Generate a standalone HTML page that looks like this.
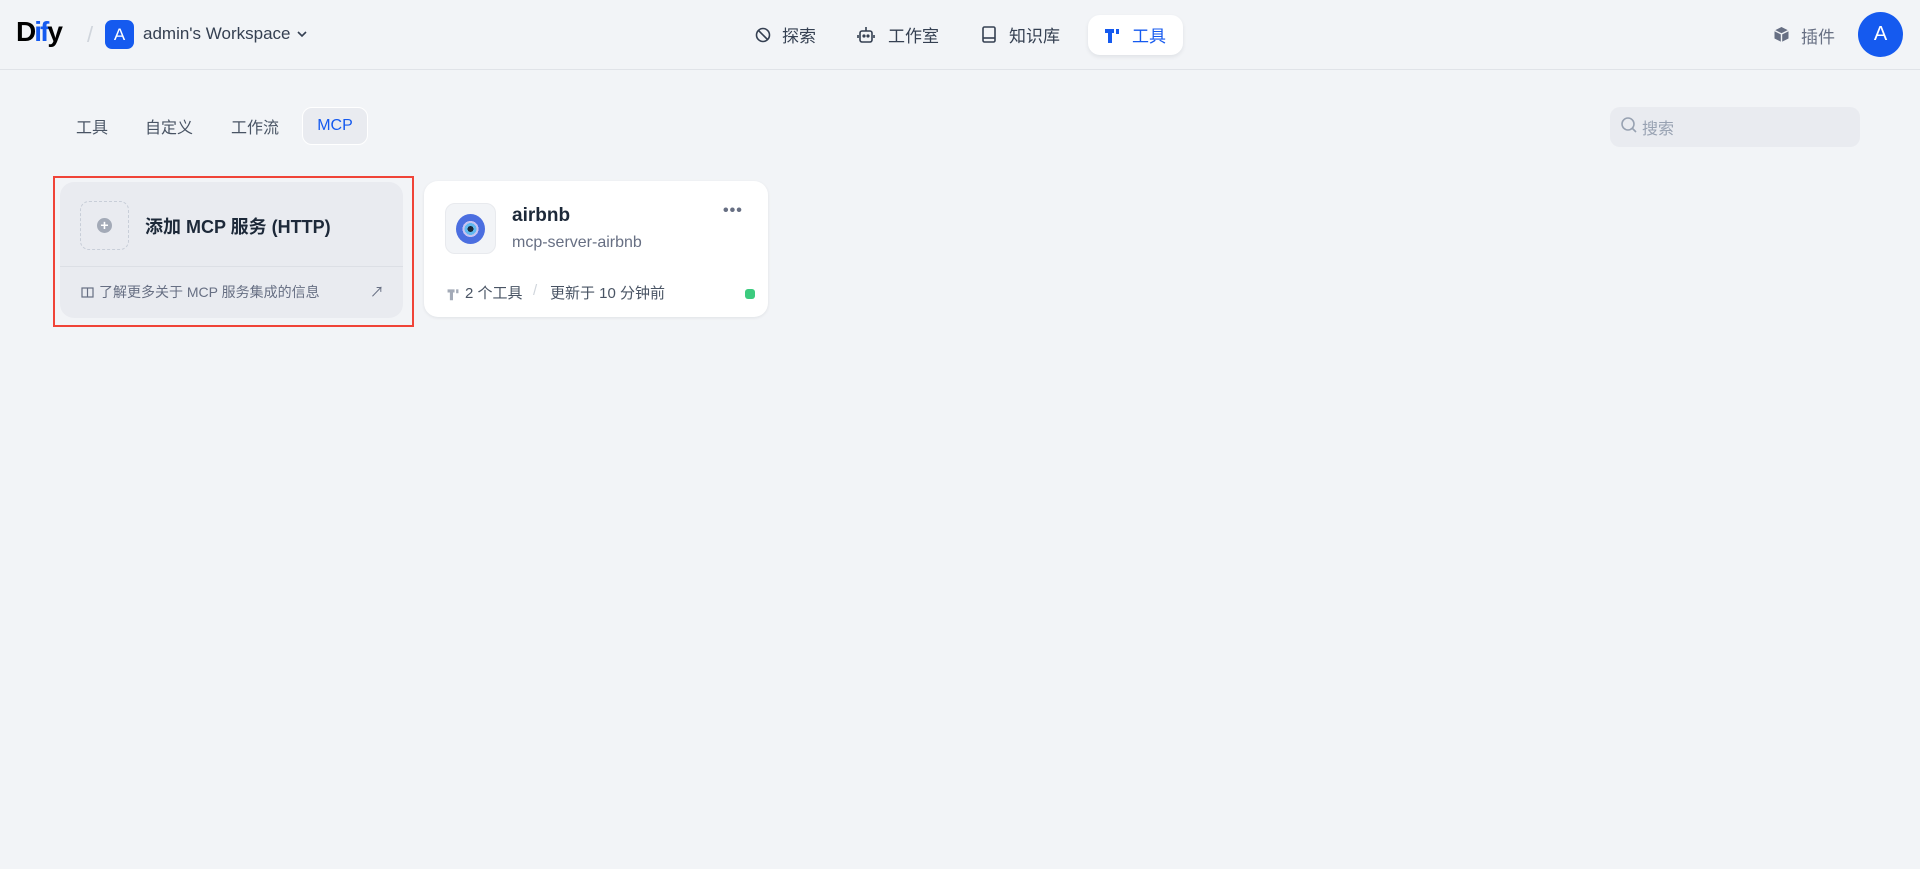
<!DOCTYPE html>
<html><head><meta charset="utf-8"><style>
*{box-sizing:border-box;margin:0;padding:0}
body{width:1920px;height:869px;background:#f2f4f7;font-family:"Liberation Sans","Noto Sans CJK SC",sans-serif;color:#354052;position:relative;overflow:hidden}
.a{position:absolute;white-space:nowrap}
.hdr{position:absolute;left:0;top:0;width:1920px;height:70px;border-bottom:1px solid #e0e3e8}
</style></head><body>
<div class="hdr"></div>
<div class="a" style="left:16px;top:16px;font-size:28px;font-weight:bold;color:#000;letter-spacing:-2px">D<span style="color:#155aef">if</span>y</div>
<div class="a" style="left:87px;top:22px;font-size:22px;color:#d0d5dc">/</div>
<div class="a" style="left:105px;top:20px;width:29px;height:29px;border-radius:7px;background:#155aef;color:#fff;font-size:17px;text-align:center;line-height:29px">A</div>
<div class="a" style="left:143px;top:24px;font-size:17px;color:#354052">admin's Workspace</div>
<svg class="a" style="left:296px;top:29px" width="12" height="10" viewBox="0 0 12 10"><path d="M2 3l4 4 4-4" stroke="#354052" stroke-width="1.6" fill="none"/></svg>

<svg class="a" style="left:754px;top:26px" width="18" height="18" viewBox="0 0 18 18" fill="none" stroke="#354052" stroke-width="1.6"><circle cx="9" cy="9" r="6.5"/><path d="M4 4l10 10"/></svg>
<div class="a" style="left:782px;top:22px;font-size:17px">探索</div>
<svg class="a" style="left:857px;top:25px" width="18" height="20" viewBox="0 0 18 20" fill="none" stroke="#354052" stroke-width="1.6"><rect x="3" y="6" width="12" height="11" rx="2"/><path d="M9 2v4M1 10v3M17 10v3"/><circle cx="7" cy="11" r=".8" fill="#354052"/><circle cx="11" cy="11" r=".8" fill="#354052"/></svg>
<div class="a" style="left:888px;top:22px;font-size:17px">工作室</div>
<svg class="a" style="left:981px;top:25px" width="16" height="19" viewBox="0 0 16 19" fill="none" stroke="#354052" stroke-width="1.6"><rect x="2" y="2" width="12" height="15" rx="1.5"/><path d="M2 13h12"/></svg>
<div class="a" style="left:1009px;top:22px;font-size:17px">知识库</div>
<div class="a" style="left:1088px;top:15px;width:95px;height:40px;border-radius:12px;background:#fff;box-shadow:0 2px 4px rgba(16,24,40,.08)"></div>
<svg class="a" style="left:1103px;top:26px" width="18" height="18" viewBox="0 0 18 18"><path d="M2 3h9v4H9v10H5V7H2z" fill="#155aef"/><path d="M13 3h3v5h-3z" fill="#155aef"/></svg>
<div class="a" style="left:1132px;top:22px;font-size:17px;color:#155aef">工具</div>

<svg class="a" style="left:1772px;top:25px" width="19" height="19" viewBox="0 0 19 19"><path d="M9.5 2l7 3.5v8L9.5 17l-7-3.5v-8z" fill="#676f83"/><path d="M2.5 5.5l7 3.5 7-3.5M9.5 9v8" stroke="#f2f4f7" stroke-width="1.4" fill="none"/></svg>
<div class="a" style="left:1801px;top:23px;font-size:17px;color:#676f83">插件</div>
<div class="a" style="left:1858px;top:12px;width:45px;height:45px;border-radius:50%;background:#155aef;color:#fff;font-size:20px;text-align:center;line-height:45px">A</div>

<div class="a" style="left:76px;top:114px;font-size:16px;color:#495464">工具</div>
<div class="a" style="left:145px;top:114px;font-size:16px;color:#495464">自定义</div>
<div class="a" style="left:231px;top:114px;font-size:16px;color:#495464">工作流</div>
<div class="a" style="left:302px;top:107px;width:66px;height:38px;border-radius:10px;background:#e9ebf0;border:1px solid #fff;color:#155aef;font-size:16px;text-align:center;line-height:36px">MCP</div>

<div class="a" style="left:1610px;top:107px;width:250px;height:40px;border-radius:10px;background:#e9ebf0"></div>
<svg class="a" style="left:1620px;top:116px" width="18" height="18" viewBox="0 0 18 18" fill="none" stroke="#98a2b2" stroke-width="1.6"><circle cx="8" cy="8" r="6"/><path d="M12.5 12.5L16 16"/></svg>
<div class="a" style="left:1642px;top:115px;font-size:16px;color:#98a2b2">搜索</div>

<div class="a" style="left:53px;top:176px;width:361px;height:151px;border:2px solid #f04438"></div>
<div class="a" style="left:60px;top:182px;width:343px;height:136px;border-radius:14px;background:#e9ebf0"></div>
<div class="a" style="left:80px;top:201px;width:49px;height:49px;border-radius:9px;border:1px dashed #c8ced8"></div>
<div class="a" style="left:97px;top:218px;width:15px;height:15px;border-radius:50%;background:#a3aab7;color:#fff;font-size:14px;line-height:15px;text-align:center;font-weight:bold">+</div>
<div class="a" style="left:145px;top:213px;font-size:18px;font-weight:bold;color:#1d2939">添加 MCP 服务 (HTTP)</div>
<div class="a" style="left:60px;top:266px;width:343px;height:1px;background:#dcdfe5"></div>
<svg class="a" style="left:81px;top:286px" width="13" height="13" viewBox="0 0 13 13" fill="none" stroke="#676f83" stroke-width="1.2"><rect x="1" y="2" width="11" height="9"/><path d="M6.5 2v9"/></svg>
<div class="a" style="left:99px;top:282px;font-size:14px;color:#676f83">了解更多关于 MCP 服务集成的信息</div>
<div class="a" style="left:370px;top:282px;font-size:14px;color:#676f83">↗</div>

<div class="a" style="left:424px;top:181px;width:344px;height:136px;border-radius:14px;background:#fff;box-shadow:0 1px 3px rgba(16,24,40,.08)"></div>
<div class="a" style="left:445px;top:203px;width:51px;height:51px;border-radius:10px;background:#f2f4f7;border:1px solid #e8eaee"></div>
<div class="a" style="left:456px;top:214px;width:29px;height:30px;border-radius:50%;background:radial-gradient(circle at 50% 50%,#1d2939 0 3px,#61b9f0 3px 6px,#c7c3f0 6px 8px,#4b6ee0 8px)"></div>
<div class="a" style="left:512px;top:205px;font-size:19px;font-weight:bold;color:#1d2939">airbnb</div>
<div class="a" style="left:512px;top:234px;font-size:16px;color:#676f83">mcp-server-airbnb</div>
<div class="a" style="left:723px;top:202px;font-size:16px;color:#676f83;font-weight:bold;letter-spacing:1px">•••</div>
<svg class="a" style="left:446px;top:287px" width="14" height="14" viewBox="0 0 18 18"><path d="M2 3h9v4H9v10H5V7H2z" fill="#a3aab7"/><path d="M13 3h3v5h-3z" fill="#a3aab7"/></svg>
<div class="a" style="left:465px;top:282px;font-size:15px;color:#495464">2 个工具</div>
<div class="a" style="left:533px;top:282px;font-size:15px;color:#d0d5dc">/</div>
<div class="a" style="left:550px;top:282px;font-size:15px;color:#495464">更新于 10 分钟前</div>
<div class="a" style="left:745px;top:289px;width:10px;height:10px;border-radius:3px;background:#3ccb7f"></div>
</body></html>
